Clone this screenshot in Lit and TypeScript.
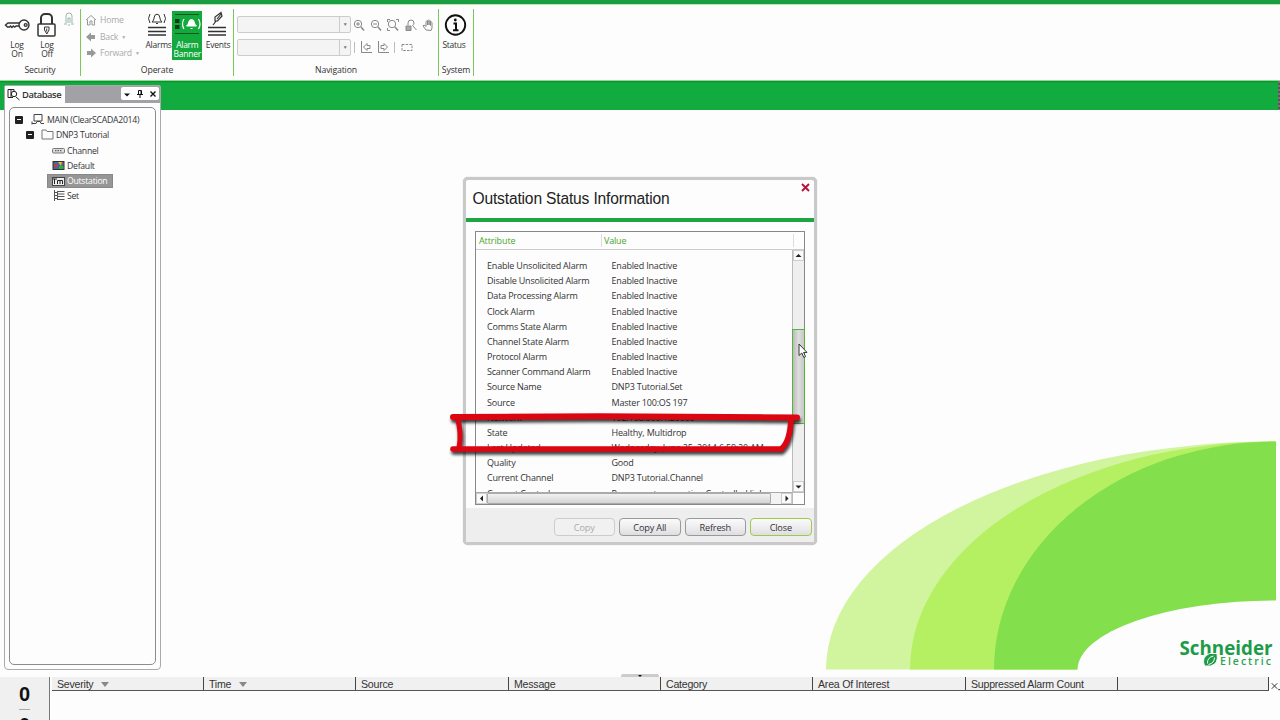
import { LitElement, html, css, svg } from "lit";
import { customElement } from "lit/decorators.js";

const rows: [string, string][] = [
  ["Enable Unsolicited Alarm", "Enabled Inactive"],
  ["Disable Unsolicited Alarm", "Enabled Inactive"],
  ["Data Processing Alarm", "Enabled Inactive"],
  ["Clock Alarm", "Enabled Inactive"],
  ["Comms State Alarm", "Enabled Inactive"],
  ["Channel State Alarm", "Enabled Inactive"],
  ["Protocol Alarm", "Enabled Inactive"],
  ["Scanner Command Alarm", "Enabled Inactive"],
  ["Source Name", "DNP3 Tutorial.Set"],
  ["Source", "Master 100:OS 197"],
  ["Network", "192.168.000.1:20000"],
  ["State", "Healthy, Multidrop"],
  ["Last Updated", "Wednesday, June 25, 2014 6:59:20 AM"],
  ["Quality", "Good"],
  ["Current Channel", "DNP3 Tutorial.Channel"],
  ["Current Control", "Permanent connection Controlled link"],
];

const columns: [string, number, boolean][] = [
  ["Severity", 152, true],
  ["Time", 152, true],
  ["Source", 153, false],
  ["Message", 152, false],
  ["Category", 152, false],
  ["Area Of Interest", 153, false],
  ["Suppressed Alarm Count", 152, false],
  ["", 151, false],
];

const magnifier = (inner: unknown) => html`<svg class="nav" viewBox="0 0 12 12">
  <circle cx="5" cy="5" r="3.7" /><path d="M8 8l3 3.4" stroke-width="1.5" />${inner}
</svg>`;

@customElement("tool-ribbon")
export class ToolRibbon extends LitElement {
  static styles = css`
    :host { display: flex; height: 77px; box-sizing: border-box; background: #fdfdfd; border-top: 1px solid #b9e8a8; border-bottom: 1px solid #8fdc8c; font: 8.7px/10px "Open Sans", sans-serif; letter-spacing: -0.25px; color: #333; }
    svg { fill: none; stroke: #333; stroke-width: 1; display: block; }
    .group { box-sizing: border-box; height: 67px; margin-top: 4px; border-right: 1px solid #7bc958; display: flex; flex-direction: column; }
    .body { height: 54px; display: flex; align-items: flex-start; }
    .caption { text-align: center; line-height: 15px; height: 13px; letter-spacing: -0.15px; }
    .security { width: 81px; }
    .operate { width: 153px; }
    .navigation { width: 205px; }
    .system { width: 35px; }
    .tool { display: flex; flex-direction: column; align-items: center; text-align: center; width: 30px; height: 49px; margin-top: 2px; font-size: 8.5px; }
    .tool svg { height: 28px; width: 28px; flex: none; }
    .tool .label { display: flex; flex-direction: column; line-height: 9px; padding-top: 1px; }
    .security .body { padding-left: 2px; }
    .active { background: #14a93d; color: #fff; margin-left: -1px; margin-right: 1px; }
    .active svg { stroke: #fff; }
    .small { width: 12px; height: 14px; margin: 3px 0 0 1px; stroke: #9ab7a8; }
    .history { width: 59px; padding-left: 4px; display: flex; flex-direction: column; color: #aaa; padding-top: 3px; }
    .step { height: 16.5px; display: flex; align-items: center; gap: 3px; white-space: nowrap; }
    .step svg { width: 12px; height: 12px; stroke: #999; }
    .step .solid { fill: #999; stroke: none; }
    .caret { font-size: 5px; }
    .navigation .body { flex-direction: column; padding: 7px 0 0 3px; box-sizing: border-box; gap: 5.5px; }
    .line { display: flex; align-items: center; height: 17px; }
    .combo { width: 114px; height: 17px; box-sizing: border-box; border: 1px solid #ccc; border-radius: 2px; background: #f4f4f5; display: flex; justify-content: flex-end; }
    .drop { width: 10px; border-left: 1px solid #ccc; font-size: 5px; line-height: 15px; text-align: center; color: #777; }
    .nav { width: 12px; height: 12px; margin-left: 5.2px; stroke: #888; }
    .nav.first { margin-left: 2px; }
    .bar { width: 1px; height: 11px; background: #bbb; }
    .bar.a { margin-left: 3px; }
    .bar.b { margin-left: 5px; }
  `;
  render() {
    return html`
      <div class="group security">
        <div class="body">
          <div class="tool"><svg viewBox="0 0 28 28"><g stroke-width="1.4"><circle cx="21" cy="14" r="5" /><circle cx="22.700" cy="14" r="1.4" /><path d="M16 12H5l-2.500 2 2 2h2l1-1 1.400 1.400 1.400-1.400 1.400 1.200 1.400-1.200H16" /></g></svg><span class="label"><span>Log</span><span>On</span></span></div>
          <div class="tool"><svg viewBox="0 0 28 28"><path d="M8 13V7a4 4 0 0 1 4-4h3a4 4 0 0 1 4 4v6" stroke-width="2" /><rect x="5" y="13" width="17" height="12" rx="1" stroke-width="1.500" /><path d="M11.500 16h4.500v3l-2.200 4-2.300-4z" /><path d="M13.700 17.500v3" /></svg><span class="label"><span>Log</span><span>Off</span></span></div>
          <svg class="small" viewBox="0 0 12 14"><path d="M3 11V4q0-3 3-3t3 3v7M5 11V6h2v5M1 12h3M8 12h3M5 13h2" /></svg>
        </div>
        <div class="caption">Security</div>
      </div>
      <div class="group operate">
        <div class="body">
          <div class="history">
            <div class="step"><svg viewBox="0 0 12 12"><path d="M1 6l5-4.500L11 6M2.500 5.500V11h2.500V7h2v4h2.500V5.500" /></svg>Home</div>
            <div class="step"><svg viewBox="0 0 12 12"><path class="solid" d="M1 6l5-4.500V4h4v4H6v2.500z" /></svg>Back <span class="caret">▼</span></div>
            <div class="step"><svg viewBox="0 0 12 12"><path class="solid" d="M11 6L6 1.500V4H2v4h4v2.500z" /></svg>Forward <span class="caret">▼</span></div>
          </div>
          <div class="tool"><svg viewBox="0 0 28 28"><path d="M7 11q2-1.500 2.300-5 .4-2.800 2.700-2.800t2.700 2.800q.3 3.500 2.300 5zM11 12.500h2M5 3q-3 4.500 0 9M19 3q3 4.500 0 9" /><path d="M3 16.500h18M3 20.500h18M3 24h18" stroke-width="1.300" /></svg><span class="label">Alarms</span></div>
          <div class="tool active"><svg viewBox="0 0 28 28"><path d="M2 3.500h24M2 22.500h24" stroke="#0a5a20" /><path d="M2 8h4.500v4H2zM2 14h4.500v4H2z" fill="#123b1a" stroke="none" /><path d="M13.500 15q2-1.500 2.300-4 .3-2.500 2.700-2.500t2.700 2.500q.3 2.500 2.300 4z" fill="#fff" /><path d="M17.500 17.500h2" /><path d="M11 8q-3 5 0 10M25.500 8q3 5 0 10" stroke-width="1.200" /></svg><span class="label"><span>Alarm</span><span>Banner</span></span></div>
          <div class="tool"><svg viewBox="0 0 28 28"><path d="M9 14l3.500-4.500M11 10V6l6-4.500 1 3.500-4.500 5zM13 8l4-5" stroke-width="1.200" /><path d="M4 16.500h18M4 20.500h18M4 24h18" stroke-width="1.300" /></svg><span class="label">Events</span></div>
        </div>
        <div class="caption">Operate</div>
      </div>
      <div class="group navigation">
        <div class="body">
          <div class="line">
            <div class="combo"><span class="drop">▼</span></div>
            <svg class="nav first" viewBox="0 0 12 12"><circle cx="5" cy="5" r="3.700" /><path d="M8 8l3 3.400" stroke-width="1.500" /><path d="M3 5h4M5 3v4" /></svg>
            ${magnifier(svg`<path d="M3 5h4" />`)}
            ${magnifier(svg`<path d="M.5 3V.5H3M9 .5h2.500V3M.5 9v2.500H3" />`)}
            <svg class="nav" viewBox="0 0 12 12"><path d="M3 6V4q0-3 3-3t3 3q0 2-1.500 2.500L11.500 11" /><path d="M1 7h5v4.500H1z" fill="#aaa" /></svg>
            <svg class="nav" viewBox="0 0 12 12"><path d="M4 11L1 7l1-1 2 1.500V2.500q.8-1 1.500 0V6 1.500q.8-1 1.500 0V6 2q.8-1 1.500 0v4.500V3.500q1-1 1.500 0V9l-1 2.500z" /></svg>
          </div>
          <div class="line">
            <div class="combo"><span class="drop">▼</span></div>
            <i class="bar a"></i>
            <svg class="nav" viewBox="0 0 12 12"><path d="M1.500 0v11.500H12M3.500 6L7 2.500v2h3v3H7v2z" /></svg>
            <svg class="nav" viewBox="0 0 12 12"><path d="M1.500 0v11.500H12M10.500 6L7 2.500v2H4v3h3v2z" /></svg>
            <i class="bar b"></i>
            <svg class="nav" viewBox="0 0 12 12"><rect x="1" y="3.500" width="10" height="6" stroke-dasharray="2.500 1.200" /></svg>
          </div>
        </div>
        <div class="caption">Navigation</div>
      </div>
      <div class="group system">
        <div class="body">
          <div class="tool"><svg viewBox="0 0 28 28"><g stroke="#111"><circle cx="15.500" cy="14" r="9.700" stroke-width="1.900" /><path d="M13.500 12.500h2.500V19M13 19.300h5.500" stroke-width="2" /></g><circle cx="15.300" cy="9" r="1.400" fill="#111" stroke="none" /></svg><span class="label">Status</span></div>
        </div>
        <div class="caption">System</div>
      </div>`;
  }
}

@customElement("database-panel")
export class DatabasePanel extends LitElement {
  static styles = css`
    :host { display: flex; flex-direction: column; box-sizing: border-box; width: 157px; height: 585px; border: 1px solid #aaa; border-radius: 2px 2px 4px 4px; background: #fdfdfd; font: 8.7px/15px "Open Sans", sans-serif; letter-spacing: -0.27px; color: #333; }
    svg { fill: none; stroke: #444; stroke-width: 1; display: block; flex: none; }
    .head { height: 17px; background: #a2a2a6; display: flex; justify-content: space-between; }
    .tab { width: 60px; background: #fdfdfd; display: flex; align-items: center; gap: 2px; padding-left: 2px; box-sizing: border-box; font-size: 9.4px; font-weight: 600; color: #333; letter-spacing: -0.45px; }
    .tab svg { width: 13px; height: 12px; stroke: #222; }
    .controls { width: 38px; height: 13px; margin: 1px 1px 0 0; background: #fff; display: flex; justify-content: space-around; align-items: center; border-radius: 2px; }
    .controls svg { width: 8px; height: 8px; stroke: #111; }
    .tree { flex: 1; margin: 4px 4px 4px 4px; border: 1px solid #8c8c8c; border-radius: 5px; padding-top: 4px; }
    .node { display: flex; align-items: center; height: 15.3px; gap: 2px; }
    .node .name { padding-top: 2px; }
    .node svg { width: 13px; height: 11px; }
    .box { width: 8px; height: 8px; background: #222; border-radius: 1px; display: flex; align-items: center; justify-content: center; }
    .box::after { content: ""; width: 4px; height: 1px; background: #fff; }
    .root { padding-left: 5px; }
    .folder { padding-left: 16px; }
    .root svg { margin: 0 1px 0 6px; }
    .folder svg { margin-left: 5px; }
    .leaf { margin-left: 37px; padding-left: 5px; }
    .selected { background: #969696; color: #fff; width: 61px; height: 14px; margin: 1px 0 0 37px; outline: 1px solid #888; outline-offset: -1px; }
    .selected .name { padding-top: 1px; }
  `;
  render() {
    return html`
      <div class="head">
        <div class="tab"><svg viewBox="0 0 13 12"><path d="M1 .5h3v8H1zM4 .5h3v2M4 8.500h2M9 8l3.500 3" /><circle cx="7" cy="5" r="2.700" /></svg>Database</div>
        <div class="controls">
          <svg viewBox="0 0 8 8"><path d="M1 3.500h6L4 6.500z" fill="#111" stroke="none" /></svg>
          <svg viewBox="0 0 8 8"><path d="M2.500 .5h3v4h-3zM1 4.500h6M4 4.500V8M5 1v3" /></svg>
          <svg viewBox="0 0 8 8"><path d="M1.500 1.500l5 5M6.500 1.500l-5 5" stroke-width="1.400" /></svg>
        </div>
      </div>
      <div class="tree">
        <div class="node root"><span class="box"></span><svg viewBox="0 0 13 11"><path d="M3 .5h8v6.500H3zM1 9.500h4l1-2h3l1 2h3M1 7.500v3" /></svg><span class="name">MAIN (ClearSCADA2014)</span></div>
        <div class="node folder"><span class="box"></span><svg viewBox="0 0 13 11"><path d="M1 10V1h4l1 1.500h6V10z" stroke="#777" /></svg><span class="name">DNP3 Tutorial</span></div>
        <div class="node leaf"><svg viewBox="0 0 13 11"><rect x=".5" y="3.500" width="12" height="4.500" rx="1" stroke="#777" fill="#ddd" /><path d="M3 5.700h7" stroke-dasharray="1.500 1" /></svg><span class="name">Channel</span></div>
        <div class="node leaf"><svg viewBox="0 0 13 11"><rect x="1" y="1.500" width="11" height="8" fill="#3b6d9a" stroke="#333" /><path d="M2 4h3v3H2z" fill="#d33" stroke="none" /><path d="M6 2h4l-1 4z" fill="#f0c030" stroke="none" /><path d="M7 6h4.500v3H7z" fill="#3a4" stroke="none" /><path d="M9 3h2.500v2z" fill="#d33" stroke="none" /></svg><span class="name">Default</span></div>
        <div class="node leaf selected"><svg viewBox="0 0 13 11"><rect x=".5" y="1.500" width="12" height="8" fill="#eee" /><path d="M2.500 3v5M5.500 8V4.500h5V8M8 5v3M1 3h4" stroke="#222" /></svg><span class="name">Outstation</span></div>
        <div class="node leaf"><svg viewBox="0 0 13 11"><path d="M2.500 0v11M2.500 2.500h3M2.500 5.500h3M2.500 8.500h3M5.500 1.500h7M5.500 4h7M5.500 6.500h7M5.500 9.500h7M5.500 1v9" stroke="#555" /></svg><span class="name">Set</span></div>
      </div>`;
  }
}

@customElement("status-dialog")
export class StatusDialog extends LitElement {
  static styles = css`
    :host { display: flex; flex-direction: column; box-sizing: border-box; width: 354px; height: 368px; border: 3px solid #c9c9c9; border-radius: 5px; background: #fdfdfd; font: 9px/15.2px "Open Sans", sans-serif; letter-spacing: -0.19px; color: #333; box-shadow: 0 0 1px #aaa; }
    svg { display: block; }
    .title { height: 38px; display: flex; justify-content: space-between; border-bottom: 4px solid #1ea641; }
    .title .text { font: 15.6px/18px "Liberation Sans", sans-serif; letter-spacing: -0.17px; color: #222; padding: 10px 0 0 6.5px; white-space: nowrap; }
    .title svg { width: 9px; height: 9px; margin: 3px 4px 0 0; }
    .frame { margin: 9px 9px 0; height: 274px; box-sizing: border-box; border: 1px solid #888; display: grid; grid-template-columns: 1fr 12px; grid-template-rows: 18px 1fr 12px; }
    .header { grid-column: 1 / 3; display: flex; color: #4aa52c; border-bottom: 1px solid #ccc; line-height: 17px; }
    .header .attr { width: 122px; padding-left: 3px; letter-spacing: -0.1px; }
    .header .val { width: 189px; border-left: 1px solid #ddd; border-right: 1px solid #ddd; padding-left: 2px; margin: 2px 0; line-height: 13px; }
    .list { overflow: hidden; padding-top: 8px; height: 234px; }
    .row { display: grid; grid-template-columns: 124.500px 1fr; padding-left: 11px; height: 15.18px; white-space: nowrap; }
    .v { background: #efefef; border-left: 1px solid #bbb; display: flex; flex-direction: column; }
    .arrow { width: 11px; height: 11px; flex: none; background: #fafafa; box-sizing: border-box; border: 1px solid #ccc; }
    .arrow path { fill: #222; }
    .vspace { height: 68px; }
    .vthumb { height: 95px; box-sizing: border-box; border: 1px solid #54b536; background: linear-gradient(90deg, #bbb, #ddd 50%, #c8c8c8); margin: 0 -1px; }
    .vrest { flex: 1; }
    .h { display: flex; border-top: 1px solid #aaa; background: #f3f3f3; height: 11px; }
    .hthumb { width: 284px; box-sizing: border-box; border: 1px solid #aaa; border-radius: 1px; background: linear-gradient(#f2f2f2, #d4d4d4); }
    .hrest { flex: 1; }
    .corner { border-left: 1px solid #bbb; border-top: 1px solid #bbb; }
    .foot { margin-top: 3px; flex: 1; background: #eee; display: flex; align-items: center; justify-content: flex-end; gap: 4px; padding: 4px 2.500px 0 0; }
    .btn { width: 61.500px; height: 18.500px; box-sizing: border-box; border: 1px solid #999; border-radius: 4px; background: linear-gradient(#fafafa, #ebebee 60%, #dedee2); text-align: center; line-height: 17.500px; font-size: 9.2px; color: #333; }
    .disabled { color: #aaa; border-color: #ccc; background: #f1f1f1; }
    .default { border-color: #9ccb4a; }
  `;
  private arrow(points: string) {
    return html`<svg class="arrow" viewBox="0 0 9 9"><path d=${points} /></svg>`;
  }
  render() {
    return html`
      <div class="title"><span class="text">Outstation Status Information</span><svg viewBox="0 0 9 9"><path d="M1 1l7 7M8 1L1 8" stroke="#b5123c" stroke-width="1.900" /></svg></div>
      <div class="frame">
        <div class="header"><span class="attr">Attribute</span><span class="val">Value</span></div>
        <div class="list">${rows.map(([a, v]) => html`<div class="row"><span>${a}</span><span>${v}</span></div>`)}</div>
        <div class="v">
          ${this.arrow("M1.500 6h6L4.500 3z")}<div class="vspace"></div><div class="vthumb"></div><div class="vrest"></div>${this.arrow("M1.500 3.500h6L4.500 6.500z")}
        </div>
        <div class="h">${this.arrow("M6 1.500v6L3 4.500z")}<div class="hthumb"></div><div class="hrest"></div>${this.arrow("M3.500 1.500v6L6.500 4.500z")}</div>
        <div class="corner"></div>
      </div>
      <div class="foot">
        <div class="btn disabled">Copy</div><div class="btn">Copy All</div><div class="btn">Refresh</div><div class="btn default">Close</div>
      </div>`;
  }
}

@customElement("alarm-list")
export class AlarmList extends LitElement {
  static styles = css`
    :host { display: flex; height: 43px; background: #fdfdfd; font: 10.600px/13px "Liberation Sans", sans-serif; letter-spacing: -0.23px; color: #333; overflow: hidden; }
    .counts { width: 50px; box-sizing: border-box; background: #f0f0f0; border-right: 1px solid #777; display: flex; flex-direction: column; align-items: center; font: bold 20px/20px "Liberation Sans", sans-serif; color: #111; padding-top: 7px; gap: 5px; flex: none; }
    .counts span { height: 20px; flex: none; }
    .rule { width: 11px; height: 1px; background: #aaa; flex: none; }
    .head { display: flex; height: 14px; box-sizing: border-box; margin-left: 2px; background: #f0f0f0; border-bottom: 1px solid #555; }
    .col { box-sizing: border-box; border-right: 1px solid #444; padding: 1px 0 0 5px; display: flex; align-items: center; gap: 8px; white-space: nowrap; flex: none; }
    .sort { width: 0; border: 4px solid transparent; border-top: 5px solid #888; border-bottom: 0; }
    .x { width: 12px; height: 10px; margin-top: 4px; fill: none; stroke: #222; }
  `;
  render() {
    return html`
      <div class="counts"><span>0</span><i class="rule"></i><span>0</span></div>
      <div class="head">
        ${columns.map(([name, width, sorted]) => html`<div class="col" style="width:${width}px">${name}${sorted ? html`<i class="sort"></i>` : null}</div>`)}
      </div>
      <svg class="x" viewBox="0 0 12 10"><path d="M3 2l6 6M9 2L3 8M10 9h2" /></svg>`;
  }
}

@customElement("app-root")
export class AppRoot extends LitElement {
  static styles = css`
    :host { display: flex; flex-direction: column; width: 1280px; height: 720px; box-sizing: border-box; overflow: hidden; position: relative; background: #fdfdfd; }
    .strip { height: 4px; background: #1c9c42; flex: none; }
    tool-ribbon { flex: none; }
    .work { height: 596px; position: relative; flex: none; background: linear-gradient(#0e8a34 0, #12ab40 2px, #12ab40 29px, #fdfdfd 29px); padding: 4px 0 0 4px; box-sizing: border-box; }
    .art { position: absolute; right: 0; bottom: 0; width: 460px; height: 240px; }
    .brand { font: bold 20px "Open Sans", sans-serif; fill: #1d9b48; }
    .brand2 { font: 600 10.500px "Open Sans", sans-serif; fill: #2aa353; }
    .dialog { position: absolute; left: 463px; top: 96px; }
    .mark { position: absolute; left: 440px; top: 325px; width: 380px; height: 60px; overflow: visible; filter: drop-shadow(1px 3px 1.500px rgba(0, 0, 0, 0.75)); }
    .cursor { position: absolute; left: 798px; top: 262px; width: 10px; height: 16px; }
    .edge { position: absolute; right: 0; top: 0; width: 2px; height: 29px; background: repeating-linear-gradient(#777 0 2px, #555 2px 4px); }
    .grip { position: absolute; left: 621px; top: 674px; width: 38px; height: 3px; background: #ccc; display: flex; justify-content: center; border-radius: 2px 2px 0 0; }
    .grip i { border: 2px solid transparent; border-top: 2px solid #111; border-bottom: 0; height: 0; margin-top: 1px; }
  `;
  render() {
    return html`
      <div class="strip"></div>
      <tool-ribbon></tool-ribbon>
      <div class="work">
        <svg class="art" viewBox="820 437 460 240">
          <path d="M826 669.500A450 228 0 0 1 1276 441.500V669.500z" fill="#d1f49e" />
          <path d="M910 669.500A366 228 0 0 1 1276 441.500V669.500z" fill="#b5f062" />
          <path d="M994 669.500A282 228 0 0 1 1276 441.500V669.500z" fill="#84df4c" />
          <path d="M1077.500 670A199 69.500 0 0 1 1276 600.500V670z" fill="#fdfdfd" />
          <text class="brand" x="1179.500" y="654.500" textLength="93" lengthAdjust="spacingAndGlyphs">Schneider</text>
          <text class="brand2" x="1220" y="665" textLength="51">Electric</text>
          <path d="M1204.500 666q-3.500-9 5-12.500l7.500 0q2 10.500-6.500 12.500z" fill="#1d9b48" stroke="#fdfdfd" stroke-width="1" />
          <path d="M1207.500 663.500q-.5-6 6-7.500M1208.500 664.500q6-1.500 6-7" fill="none" stroke="#fdfdfd" stroke-width="1" />
        </svg>
        <database-panel></database-panel>
        <status-dialog class="dialog"></status-dialog>
        <svg class="cursor" viewBox="0 0 10 16"><path d="M1 1v11.500l2.800-2.500 2 4.500 1.800-.8-2-4.300H9z" fill="#fff" stroke="#333" /></svg>
        <svg class="mark" viewBox="440 406 380 60">
          <g fill="none" stroke="#dc0612" stroke-linecap="round" stroke-linejoin="round">
            <path d="M453 417L600 416.300 797 417.500" stroke-width="6" />
            <path d="M457 417q5 15 2 31" stroke-width="5" />
            <path d="M453 449H781Q790 442 791 419" stroke-width="5.600" />
          </g>
        </svg>
        <div class="edge"></div>
      </div>
      <alarm-list></alarm-list>
      <div class="grip"><i></i></div>`;
  }
}
